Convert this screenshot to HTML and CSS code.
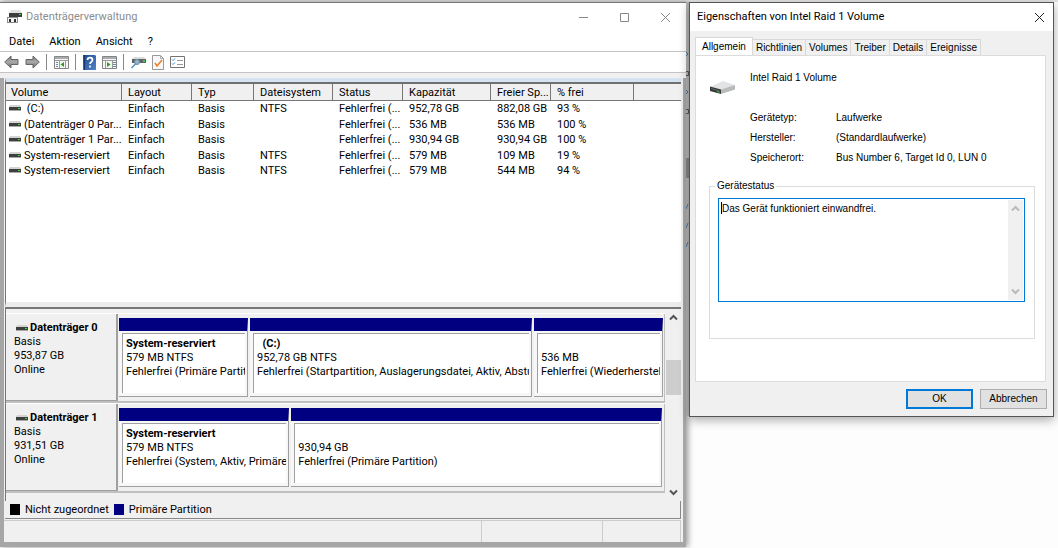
FILE: index.html
```html
<!DOCTYPE html>
<html lang="de">
<head>
<meta charset="utf-8">
<title>Datenträgerverwaltung</title>
<link rel="stylesheet" href="styles.css">
</head>
<body>
<svg width="0" height="0" class="defs" aria-hidden="true">
  <defs>
    <linearGradient id="metal" x1="0" y1="0" x2="0" y2="1"><stop offset="0" stop-color="#777"/><stop offset=".5" stop-color="#aaa"/><stop offset="1" stop-color="#666"/></linearGradient>
    <linearGradient id="book" x1="0" y1="0" x2="1" y2="1"><stop offset="0" stop-color="#1d4a8f"/><stop offset="1" stop-color="#5384c8"/></linearGradient>
    <symbol id="drive" viewBox="0 0 12 6"><path d="M1 0h10l1 2H0z" fill="#d4d4d4"/><path d="M0 2h12v3H0z" fill="#3c3f3c"/><path d="M0 5h12v1H0z" fill="#a9a9a9"/><path d="M9 3h2v1H9z" fill="#3fdc3f"/></symbol>
    <symbol id="up" viewBox="0 0 9 7"><path d="M1 5.500l3.500-3.500L8 5.500" fill="none" stroke="currentColor" stroke-width="2"/></symbol>
    <symbol id="down" viewBox="0 0 9 7"><path d="M1 1.500l3.500 3.500L8 1.500" fill="none" stroke="currentColor" stroke-width="2"/></symbol>
  </defs>
</svg>
<div class="desktop">
  <main class="window manager">
    <header class="titlebar">
      <svg class="app-icon" width="15" height="14" viewBox="0 0 15 14"><path d="M4 0h9l2 3H2z" fill="#dedede"/><path d="M2 3h13v4H2z" fill="#3c3c3c"/><path d="M12 4h2v1h-2z" fill="#3fdc3f"/><path d="M0 7h11v6H0z" fill="#8c8c8c"/><path d="M1 8h9v4H1z" fill="#f4f4f4"/><path d="M2 9h2v3H2zM7 9h2v3H7z" fill="#333"/></svg>
      <h1>Datenträgerverwaltung</h1>
      <div class="caption-buttons">
        <button type="button" aria-label="Minimieren"><svg width="11" height="11" viewBox="0 0 11 11"><path d="M1 5.500h9" stroke="#888"/></svg></button>
        <button type="button" aria-label="Maximieren"><svg width="11" height="11" viewBox="0 0 11 11"><path d="M1.500 1.500h8v8h-8z" fill="none" stroke="#888"/></svg></button>
        <button type="button" aria-label="Schließen"><svg width="11" height="11" viewBox="0 0 11 11"><path d="M1 1l9 9M10 1l-9 9" stroke="#888"/></svg></button>
      </div>
    </header>
    <nav class="menubar">
      <button type="button">Datei</button><button type="button">Aktion</button><button type="button">Ansicht</button><button type="button">?</button>
    </nav>
    <div class="toolbar">
      <button type="button" aria-label="Zurück"><svg width="15" height="14" viewBox="0 0 15 14"><path d="M.7 7l6.300-6v3.500h7v5H7V13z" fill="url(#metal)" stroke="#666"/></svg></button>
      <button type="button" aria-label="Vorwärts"><svg width="15" height="14" viewBox="0 0 15 14"><path d="M14.300 7L8 1v3.500H1v5h7V13z" fill="url(#metal)" stroke="#666"/></svg></button>
      <span class="sep"></span>
      <button type="button" aria-label="Konsolenstruktur"><svg width="15" height="13" viewBox="0 0 15 13"><path d="M.5.500h14v12H.5z" fill="#f6f6f2" stroke="#858585"/><path d="M1 1h13v2H1z" fill="#a7adb3"/><path d="M1 4.500h13M5.500 5v7M11.500 5v7" stroke="#9a9a9a"/><path d="M2 6.500h2M2 8.500h2M2 10.500h2" stroke="#6c8dac"/><path d="M10 6v5L6.500 8.500z" fill="#2d9c2d"/></svg></button>
      <span class="sep"></span>
      <button type="button" aria-label="Hilfe"><svg width="13" height="15" viewBox="0 0 13 15"><path d="M0 0h12l1 1v14H0z" fill="url(#book)"/><path d="M1.500 0v15" stroke="#16386f"/><path d="M4.500 5c0-3.200 5-3.200 5 0 0 2-2.500 2-2.500 4M7 10.500v2" fill="none" stroke="#fff" stroke-width="1.700"/></svg></button>
      <button type="button" aria-label="Aktionsbereich"><svg width="15" height="13" viewBox="0 0 15 13"><path d="M.5.500h14v12H.5z" fill="#f6f6f2" stroke="#858585"/><path d="M1 1h13v2H1z" fill="#a7adb3"/><path d="M1 4.500h13M3.500 5v7M10.500 5v7" stroke="#9a9a9a"/><path d="M11 6.500h3M11 8.500h3M11 10.500h3" stroke="#6c8dac"/><path d="M5 6v5l3.500-2.500z" fill="#2d9c2d"/></svg></button>
      <span class="sep"></span>
      <button type="button" aria-label="Aktualisieren"><svg width="15" height="13" viewBox="0 0 15 13"><path d="M3 1h10l2 2H1z" fill="#dcdcdc"/><path d="M1 3h14v4H1z" fill="#5f6562"/><path d="M12 4h2v2h-2z" fill="#39cd50"/><circle cx="6" cy="6" r="2.500" fill="#8fb9cd" stroke="#6a8ba0"/><path d="M4.500 8L.5 12" stroke="#4d8cbb" stroke-width="1.500"/></svg></button>
      <button type="button" aria-label="Prüfen"><svg width="12" height="15" viewBox="0 0 12 15"><path d="M.5.500h8l3 3v11H.5z" fill="#f8f8f8" stroke="#999"/><path d="M8.500.500v3h3" fill="none" stroke="#aaa"/><path d="M3 8l2 3 5-6" fill="none" stroke="#ef7d20" stroke-width="1.500"/></svg></button>
      <button type="button" aria-label="Eigenschaften"><svg width="15" height="12" viewBox="0 0 15 12"><path d="M.5.500h14v11H.5z" fill="#fff" stroke="#747474"/><path d="M2 3.500l1 1 2-2M2 7.500l1 1 2-2" fill="none" stroke="#388bd0"/><path d="M7 4.500h6M7 8.500h6" stroke="#999"/></svg></button>
    </div>
    <div class="client">
      <section class="volumes">
        <table>
          <colgroup><col class="c-volume"><col class="c-layout"><col class="c-type"><col class="c-fs"><col class="c-status"><col class="c-cap"><col class="c-free"><col class="c-pct"><col></colgroup>
          <thead><tr><th>Volume</th><th>Layout</th><th>Typ</th><th>Dateisystem</th><th>Status</th><th>Kapazität</th><th>Freier Sp...</th><th>% frei</th><th></th></tr></thead>
          <tbody>
            <tr><td><svg width="12" height="6"><use href="#drive"/></svg>&nbsp;(C:)</td><td>Einfach</td><td>Basis</td><td>NTFS</td><td>Fehlerfrei (...</td><td>952,78 GB</td><td>882,08 GB</td><td>93 %</td><td></td></tr>
            <tr><td><svg width="12" height="6"><use href="#drive"/></svg>(Datenträger 0 Par...</td><td>Einfach</td><td>Basis</td><td></td><td>Fehlerfrei (...</td><td>536 MB</td><td>536 MB</td><td>100 %</td><td></td></tr>
            <tr><td><svg width="12" height="6"><use href="#drive"/></svg>(Datenträger 1 Par...</td><td>Einfach</td><td>Basis</td><td></td><td>Fehlerfrei (...</td><td>930,94 GB</td><td>930,94 GB</td><td>100 %</td><td></td></tr>
            <tr><td><svg width="12" height="6"><use href="#drive"/></svg>System-reserviert</td><td>Einfach</td><td>Basis</td><td>NTFS</td><td>Fehlerfrei (...</td><td>579 MB</td><td>109 MB</td><td>19 %</td><td></td></tr>
            <tr><td><svg width="12" height="6"><use href="#drive"/></svg>System-reserviert</td><td>Einfach</td><td>Basis</td><td>NTFS</td><td>Fehlerfrei (...</td><td>579 MB</td><td>544 MB</td><td>94 %</td><td></td></tr>
          </tbody>
        </table>
      </section>
      <section class="graphical">
        <div class="disks">
          <article class="disk">
            <div class="disk-label"><h2><svg width="12" height="6"><use href="#drive"/></svg>Datenträger 0</h2><p>Basis</p><p>953,87 GB</p><p>Online</p></div>
            <div class="partitions first">
              <div class="part"><div class="part-body"><strong>System-reserviert</strong><p>579 MB NTFS</p><p>Fehlerfrei (Primäre Partit</p></div></div>
              <div class="part"><div class="part-body"><strong>&nbsp; (C:)</strong><p>952,78 GB NTFS</p><p>Fehlerfrei (Startpartition, Auslagerungsdatei, Aktiv, Abstu</p></div></div>
              <div class="part"><div class="part-body"><strong>&nbsp;</strong><p>536 MB</p><p>Fehlerfrei (Wiederherstel</p></div></div>
            </div>
          </article>
          <article class="disk">
            <div class="disk-label"><h2><svg width="12" height="6"><use href="#drive"/></svg>Datenträger 1</h2><p>Basis</p><p>931,51 GB</p><p>Online</p></div>
            <div class="partitions second">
              <div class="part"><div class="part-body"><strong>System-reserviert</strong><p>579 MB NTFS</p><p>Fehlerfrei (System, Aktiv, Primäre</p></div></div>
              <div class="part"><div class="part-body"><strong>&nbsp;</strong><p>930,94 GB</p><p>Fehlerfrei (Primäre Partition)</p></div></div>
            </div>
          </article>
        </div>
        <div class="scrollbar">
          <button type="button" aria-label="Nach oben"><svg width="9" height="7"><use href="#up"/></svg></button>
          <div class="track"><div class="thumb"></div></div>
          <button type="button" aria-label="Nach unten"><svg width="9" height="7"><use href="#down"/></svg></button>
        </div>
      </section>
      <div class="legend"><span class="key"></span>Nicht zugeordnet<span class="key primary"></span>Primäre Partition</div>
      <footer class="statusbar"><span></span><span></span><span></span></footer>
    </div>
  </main>
  <svg class="sliver" width="3" height="414" viewBox="0 0 3 414" aria-hidden="true"><path d="M0 0h3v414H0z" fill="#b4b4b4"/><path d="M0 156h3v20H0z" fill="#858585"/><path d="M0 50l2 2-2 2M0 88l2 2-2 2M2 202l-2 5M2 221l-2 5M2 240l-2 5" fill="none" stroke="#3f76a8"/><path d="M0 69.500h2.500v4H0M0 107.500h2.500v4H0" fill="none" stroke="#555"/></svg>
  <aside class="window dialog">
    <header class="titlebar">
      <h1>Eigenschaften von Intel Raid 1 Volume</h1>
      <button type="button" class="close" aria-label="Schließen"><svg width="11" height="11" viewBox="0 0 11 11"><path d="M1 1l9 9M10 1l-9 9" stroke="#222"/></svg></button>
    </header>
    <div class="dialog-body">
      <div class="tabs" role="tablist">
        <button type="button" role="tab" aria-selected="true">Allgemein</button><button type="button" role="tab">Richtlinien</button><button type="button" role="tab">Volumes</button><button type="button" role="tab">Treiber</button><button type="button" role="tab">Details</button><button type="button" role="tab">Ereignisse</button>
      </div>
      <div class="page">
        <div class="device">
          <svg width="27" height="14" viewBox="0 0 27 14"><path d="M1 6L14 0l12 4-14 5z" fill="#e2e3e4"/><path d="M1 5.500l11 3V13L1 10z" fill="#343a36"/><path d="M12 8.500L26 4v4.500L12 13z" fill="#b7b9bb"/><path d="M2 7l8 2.200v1L2 8z" fill="#666"/><path d="M8 10l3 .8v1L8 11z" fill="#35c935"/></svg>
          <p>Intel Raid 1 Volume</p>
        </div>
        <dl><dt>Gerätetyp:</dt><dd>Laufwerke</dd><dt>Hersteller:</dt><dd>(Standardlaufwerke)</dd><dt>Speicherort:</dt><dd>Bus Number 6, Target Id 0, LUN 0</dd></dl>
        <fieldset>
          <legend><label for="status">Gerätestatus</label></legend>
          <div class="status-box">
            <textarea id="status" readonly>Das Gerät funktioniert einwandfrei.</textarea>
            <div class="scrollbar muted">
              <button type="button" aria-label="Nach oben"><svg width="9" height="7"><use href="#up"/></svg></button>
              <div class="track"></div>
              <button type="button" aria-label="Nach unten"><svg width="9" height="7"><use href="#down"/></svg></button>
            </div>
          </div>
        </fieldset>
      </div>
      <div class="actions"><button type="button" class="default">OK</button><button type="button">Abbrechen</button></div>
    </div>
  </aside>
</div>
</body>
</html>
```
FILE: styles.css
```css
* { box-sizing: border-box; }
body { margin: 0; background: #fff; color: #000; font: 11px/14px Roboto, "Open Sans", sans-serif; }
h1, h2, p, dl, dd { margin: 0; font-size: inherit; font-weight: inherit; }
button { margin: 0; padding: 0; border: 0; background: none; color: inherit; font: inherit; }
svg { display: block; flex: none; }
.defs { position: absolute; }
.desktop { display: grid; grid-template-columns: minmax(0, 686fr) 3px minmax(0, 365fr); min-height: 100vh; padding: 2px 4px 1px 0; align-items: start; background: linear-gradient(#e4e4e4 2px, #fdfdfd 2px); }
.window { display: flex; flex-direction: column; }
.titlebar { display: flex; align-items: center; background: #fff; height: 28px; }

.manager { min-height: calc(100vh - 3px); border-top: 1px solid #777; background: #f0f0f0; box-shadow: 2px 0 6px #0006; }
.manager .titlebar { padding-left: 7px; gap: 4px; color: #8c8c8c; }
.caption-buttons { margin-left: auto; display: flex; }
.caption-buttons button { width: 41px; display: flex; justify-content: center; }
.menubar { display: flex; gap: 15px; padding: 1px 0 0 9px; background: #fff; height: 20px; align-items: center; }
.toolbar { display: flex; align-items: center; gap: 6px; height: 22px; padding-left: 4px; background: #fff; border: solid #c4c4c4; border-width: 1px 0; }
.toolbar .sep { width: 1px; height: 16px; margin-right: 1px; background: #888; }
.client { flex: 1; display: flex; flex-direction: column; margin-top: 5px; padding-right: 2px; border: solid #a6a6a6; border-width: 0 3px 5px 4px; }
.volumes, .graphical, .legend { margin-left: 1px; }
.volumes { flex: 1; background: #fff; border-top: 4px solid #d5e2f0; border-left: 1px solid #777; border-bottom: 5px solid #ececec; min-height: 229px; }
table { width: 100%; table-layout: fixed; border-collapse: separate; border-spacing: 0; border-top: 2px solid #707070; }
.c-volume { width: 116px; } .c-layout, .c-status { width: 70px; } .c-type { width: 62px; } .c-fs { width: 79px; } .c-cap { width: 88px; } .c-free { width: 60px; } .c-pct { width: 83px; }
th, td { padding: 1px 0 0 6px; text-align: left; font-weight: 400; white-space: nowrap; overflow: hidden; height: 16px; }
tr:nth-child(odd) td { height: 15px; }
th { height: 17px; background: #f0f0f0; border-right: 1px solid #777; border-bottom: 1px solid #777; }
th:last-child { border-right: 0; }
th:first-child { padding-left: 5px; }
td:first-child { padding-left: 3px; }
td svg { display: inline-block; margin-right: 3px; vertical-align: 1px; }
.graphical { display: flex; border-top: 2px solid #777; border-left: 1px solid #777; }
.disks { flex: 1; min-width: 0; padding: 4px 1px 8px 0; }
.disk { display: flex; height: 90px; border-bottom: 2px solid #c0c0c0; border-top: 1px solid #fff; }
.disk-label { width: 112px; padding: 7px 0 0 8px; border-right: 2px solid #a0a0a0; border-bottom: 1px solid #a0a0a0; }
.disk-label h2, .part strong { font-weight: 700; }
.disk-label h2 { display: flex; align-items: center; gap: 2px; padding-left: 2px; }
.partitions { flex: 1; min-width: 0; display: grid; gap: 2px; padding: 4px 1px 4px 1px; border-right: 1px solid #c0c0c0; }
.first { grid-template-columns: 129fr 282fr 129fr; }
.second { grid-template-columns: 170fr 370fr; padding-right: 2px; }
.part { min-width: 0; display: flex; flex-direction: column; border-top: 13px solid navy; border-bottom: 1px solid #a0a0a0; border-right: 1px solid #a0a0a0; background: #f7f7f7; padding: 2px 2px 3px 3px; }
.part-body { flex: 1; overflow: hidden; white-space: nowrap; padding: 3px 0 0 3px; background: #fff; border: solid #a0a0a0; border-width: 1px 0 0 1px; }
.scrollbar { display: flex; flex-direction: column; width: 15px; color: #555; }
.scrollbar button { height: 17px; display: flex; align-items: center; justify-content: center; }
.track { flex: 1; }
.thumb { height: 35px; margin-top: 34px; background: #cdcdcd; }
.legend { display: flex; align-items: center; gap: 5px; height: 18px; padding-left: 5px; border: solid #888; border-width: 0 1px 1px 0; }
.key { width: 10px; height: 11px; background: #000; }
.primary { background: navy; }
.statusbar { display: grid; grid-template-columns: 477fr 121fr 78fr; height: 22px; margin-top: 1px; border-top: 1px solid #ccc; }
.statusbar span { border-right: 1px solid #ccc; }

.dialog { border: 1px solid #555; background: #f0f0f0; box-shadow: 0 3px 10px #0005; min-height: 415px; }
.dialog .titlebar { padding: 0 8px 0 7px; }
.close { margin-left: auto; }
.dialog-body { flex: 1; padding: 6px 6px 7px 5px; font: 10px/14px "Liberation Sans", Arial, sans-serif; display: flex; flex-direction: column; }
.tabs { display: flex; align-items: flex-end; height: 18px; }
.tabs button { height: 16px; padding: 1px 3px 0; border: 1px solid #d9d9d9; border-left-width: 0; border-bottom: 0; }
.tabs button[aria-selected] { height: 19px; padding: 0 6px; border-left-width: 1px; background: #fff; margin-bottom: -1px; }
.page { flex: 1; margin-right: 1px; background: #fff; border: 1px solid #dcdcdc; padding: 15px 10px 41px 13px; }
.device { display: flex; gap: 14px; }
.device svg { margin-top: 10px; }
dl { display: grid; grid-template-columns: 86px 1fr; row-gap: 6px; margin: 16px 0 14px 41px; }
fieldset { margin: 0; padding: 5px 9px 36px 8px; border: 1px solid #dcdcdc; min-width: 0; }
legend { margin-left: -3px; padding: 0 2px; }
.status-box { display: flex; height: 104px; border: 1px solid #0078d7; padding: 1px; }
textarea { flex: 1; min-width: 0; border: 0; padding: 2px 2px 1px; resize: none; outline: 0; font: inherit; overflow: hidden; background: linear-gradient(#000, #000) 1px 2px / 1px 12px no-repeat; }
.muted { background: #f0f0f0; color: #b9b9b9; }
.actions { display: flex; justify-content: flex-end; gap: 7px; margin-top: 7px; }
.actions button { width: 67px; height: 20px; background: #e1e1e1; border: 1px solid #adadad; }
.actions .default { border: 2px solid #0078d7; }
```
